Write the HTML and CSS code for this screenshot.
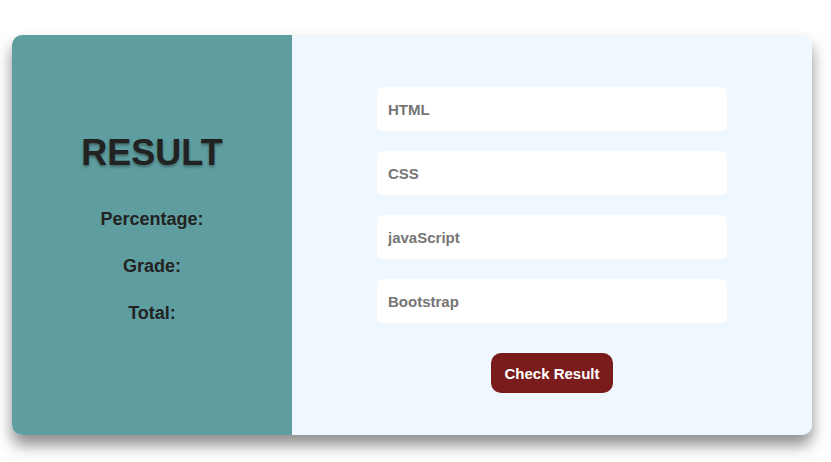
FILE: index.html
```html
<!DOCTYPE html>
<html>
<head>
<meta charset="utf-8">
<link rel="stylesheet" href="styles.css">
</head>
<body>
<div class="card">
  <div class="left">
    <h1 class="title">RESULT</h1>
    <p class="label">Percentage:</p>
    <p class="label">Grade:</p>
    <p class="label">Total:</p>
  </div>
  <div class="right">
    <input class="field" type="text" placeholder="HTML">
    <input class="field" type="text" placeholder="CSS">
    <input class="field" type="text" placeholder="javaScript">
    <input class="field" type="text" placeholder="Bootstrap">
    <button class="btn">Check Result</button>
  </div>
</div>
</body>
</html>
```
FILE: styles.css
```css
* { box-sizing: border-box; }
html, body { margin: 0; padding: 0; background: #fff; }
body {
  font-family: "Liberation Sans", Arial, sans-serif;
  padding: 35px 19px 27px 12px;
}
.card {
  width: 800px;
  height: 400px;
  display: flex;
  border-radius: 10px;
  overflow: hidden;
  box-shadow: 0 10px 15px rgba(0,0,0,0.45);
}
.left {
  width: 280px;
  background: #5f9ea0;
  display: flex;
  flex-direction: column;
  align-items: center;
  padding-top: 96px;
  color: #222;
}
.title {
  margin: 0;
  font-size: 36px;
  font-weight: bold;
  line-height: 44px;
  text-shadow: 0 2px 3px rgba(0,0,0,0.35);
}
.label {
  margin: 0;
  font-size: 18px;
  font-weight: bold;
  line-height: 22px;
}
.title + .label { margin-top: 33px; }
.label + .label { margin-top: 25px; }
.right {
  flex: 1;
  background: #f0f8ff;
  display: flex;
  flex-direction: column;
  align-items: center;
  padding-top: 52px;
}
.field {
  width: 350px;
  height: 44px;
  border: none;
  border-radius: 6px;
  background: #fff;
  padding: 0 11px;
  font-family: inherit;
  font-size: 15px;
  font-weight: bold;
  margin-bottom: 20px;
  outline: none;
}
.field::placeholder { color: #757575; }
.btn {
  margin-top: 10px;
  width: 122px;
  height: 40px;
  border: none;
  border-radius: 10px;
  background: #7b1c1c;
  color: #fff;
  font-family: inherit;
  font-size: 15px;
  font-weight: bold;
}
```
